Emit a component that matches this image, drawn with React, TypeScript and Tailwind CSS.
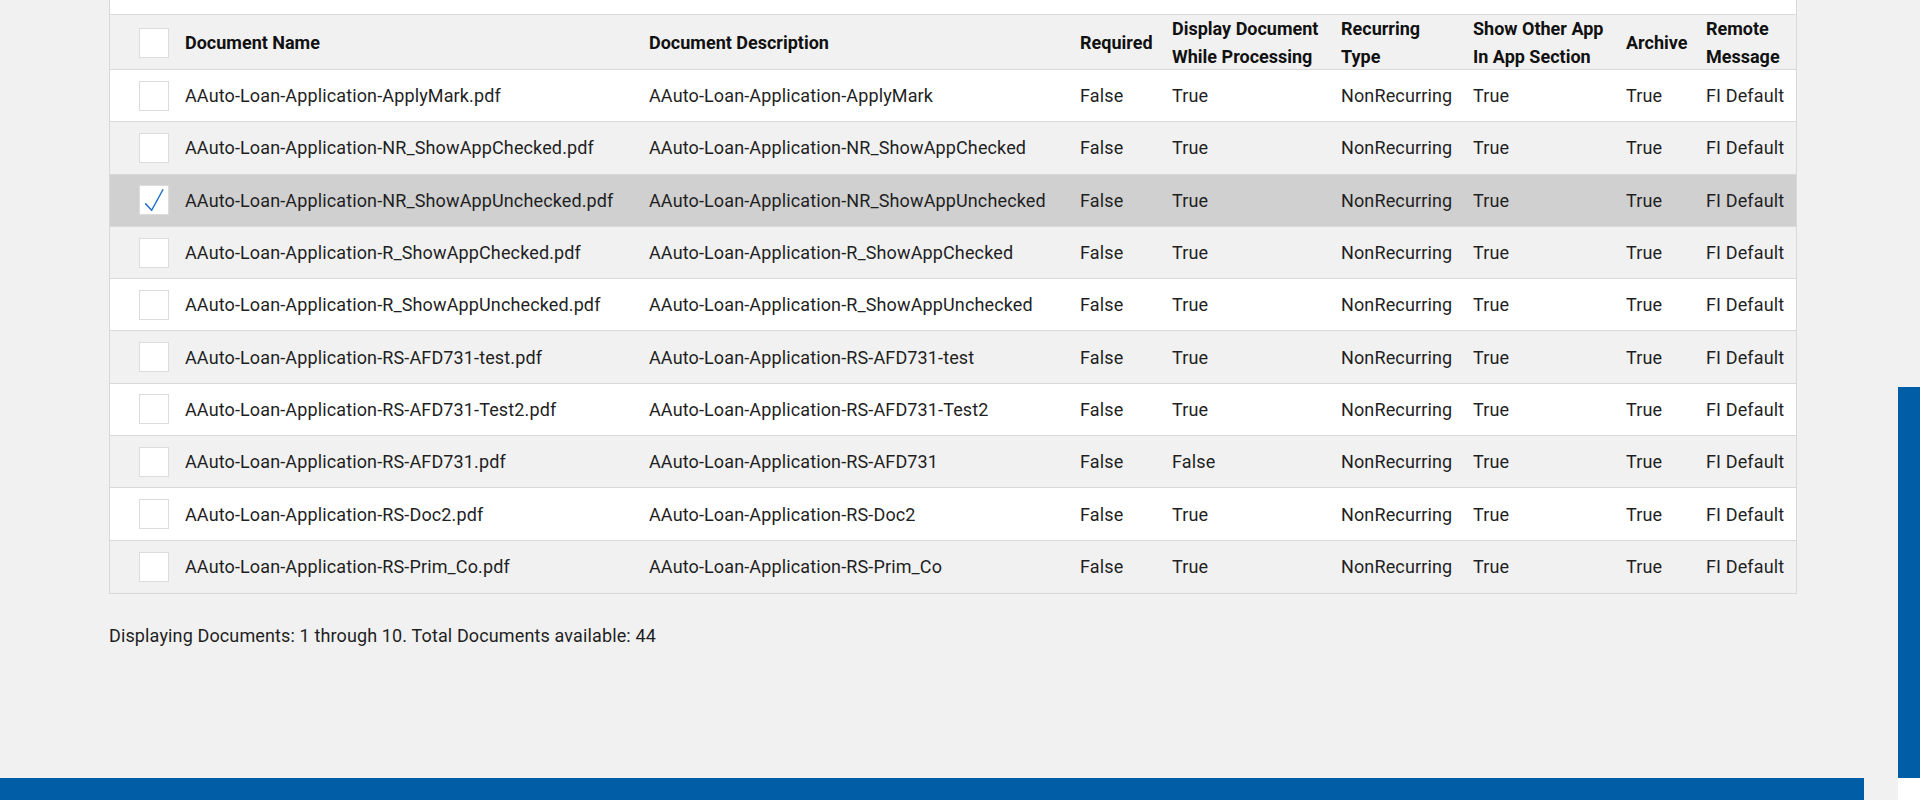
import React from "react";

type Row = {
  name: string;
  desc: string;
  display: string;
};

const rows: Row[] = [
  { name: "AAuto-Loan-Application-ApplyMark.pdf", desc: "AAuto-Loan-Application-ApplyMark", display: "True" },
  { name: "AAuto-Loan-Application-NR_ShowAppChecked.pdf", desc: "AAuto-Loan-Application-NR_ShowAppChecked", display: "True" },
  { name: "AAuto-Loan-Application-NR_ShowAppUnchecked.pdf", desc: "AAuto-Loan-Application-NR_ShowAppUnchecked", display: "True" },
  { name: "AAuto-Loan-Application-R_ShowAppChecked.pdf", desc: "AAuto-Loan-Application-R_ShowAppChecked", display: "True" },
  { name: "AAuto-Loan-Application-R_ShowAppUnchecked.pdf", desc: "AAuto-Loan-Application-R_ShowAppUnchecked", display: "True" },
  { name: "AAuto-Loan-Application-RS-AFD731-test.pdf", desc: "AAuto-Loan-Application-RS-AFD731-test", display: "True" },
  { name: "AAuto-Loan-Application-RS-AFD731-Test2.pdf", desc: "AAuto-Loan-Application-RS-AFD731-Test2", display: "True" },
  { name: "AAuto-Loan-Application-RS-AFD731.pdf", desc: "AAuto-Loan-Application-RS-AFD731", display: "False" },
  { name: "AAuto-Loan-Application-RS-Doc2.pdf", desc: "AAuto-Loan-Application-RS-Doc2", display: "True" },
  { name: "AAuto-Loan-Application-RS-Prim_Co.pdf", desc: "AAuto-Loan-Application-RS-Prim_Co", display: "True" },
];

const cols = "grid grid-cols-[75px_464px_431px_92px_169px_132px_153px_80px_1fr]";

function Checkbox({ checked }: { checked?: boolean }) {
  return (
    <div className="w-[30px] h-[30px] bg-white border border-[#dcdcdc] flex items-center justify-center">
      {checked && (
        <svg width="30" height="30" viewBox="0 0 30 30" className="block">
          <path d="M6 19 L12.5 26 L24.5 4" fill="none" stroke="#1f6fcf" strokeWidth="1.6" strokeLinecap="round" strokeLinejoin="round" />
        </svg>
      )}
    </div>
  );
}

export default function App() {
  return (
    <div
      className="relative w-[1920px] h-[800px] overflow-hidden bg-[#f1f1f1] text-[#1f1f1f]"
      style={{ fontFamily: "Roboto, 'Liberation Sans', Arial, sans-serif" }}
    >
      <div className="pl-[109px] w-[1797px]">
        <div className="h-[14px] bg-white border-x border-[#d9d9d9]" />
        <div className="border border-[#d9d9d9] text-[18px]">
          <div className={`${cols} h-[55px] bg-[#f1f1f1] border-b border-[#d9d9d9] font-bold text-[#111] leading-[28px]`}>
            <div className="flex items-center pl-[29px]">
              <Checkbox />
            </div>
            <div className="flex items-center">Document Name</div>
            <div className="flex items-center">Document Description</div>
            <div className="flex items-center">Required</div>
            <div className="flex items-center">Display Document<br />While Processing</div>
            <div className="flex items-center">Recurring<br />Type</div>
            <div className="flex items-center">Show Other App<br />In App Section</div>
            <div className="flex items-center">Archive</div>
            <div className="flex items-center">Remote<br />Message</div>
          </div>
          {rows.map((r, i) => {
            const selected = i === 2;
            const bg = selected ? "bg-[#d0d0d0]" : i % 2 === 0 ? "bg-white" : "bg-[#f1f1f1]";
            const last = i === rows.length - 1;
            return (
              <div
                key={r.name}
                className={`${cols} h-[52.3px] ${bg} ${last ? "" : "border-b border-[#d9d9d9]"} items-center tracking-[0.13px]`}
              >
                <div className="flex items-center pl-[29px]">
                  <Checkbox checked={selected} />
                </div>
                <div className="whitespace-nowrap">{r.name}</div>
                <div className="whitespace-nowrap">{r.desc}</div>
                <div>False</div>
                <div>{r.display}</div>
                <div>NonRecurring</div>
                <div>True</div>
                <div>True</div>
                <div className="whitespace-nowrap">FI Default</div>
              </div>
            );
          })}
        </div>
        <div className="mt-[30px] text-[18px] leading-[24px] tracking-[0.13px]">
          Displaying Documents: 1 through 10. Total Documents available: 44
        </div>
      </div>

      <div className="absolute left-0 bottom-0 w-[1864px] h-[22px] bg-[#005da6]" />
      <div className="absolute right-0 top-[387px] w-[22px] h-[391px] bg-[#005da6]" />
      <div className="absolute right-0 bottom-0 w-[22px] h-[22px] bg-white" />
    </div>
  );
}
